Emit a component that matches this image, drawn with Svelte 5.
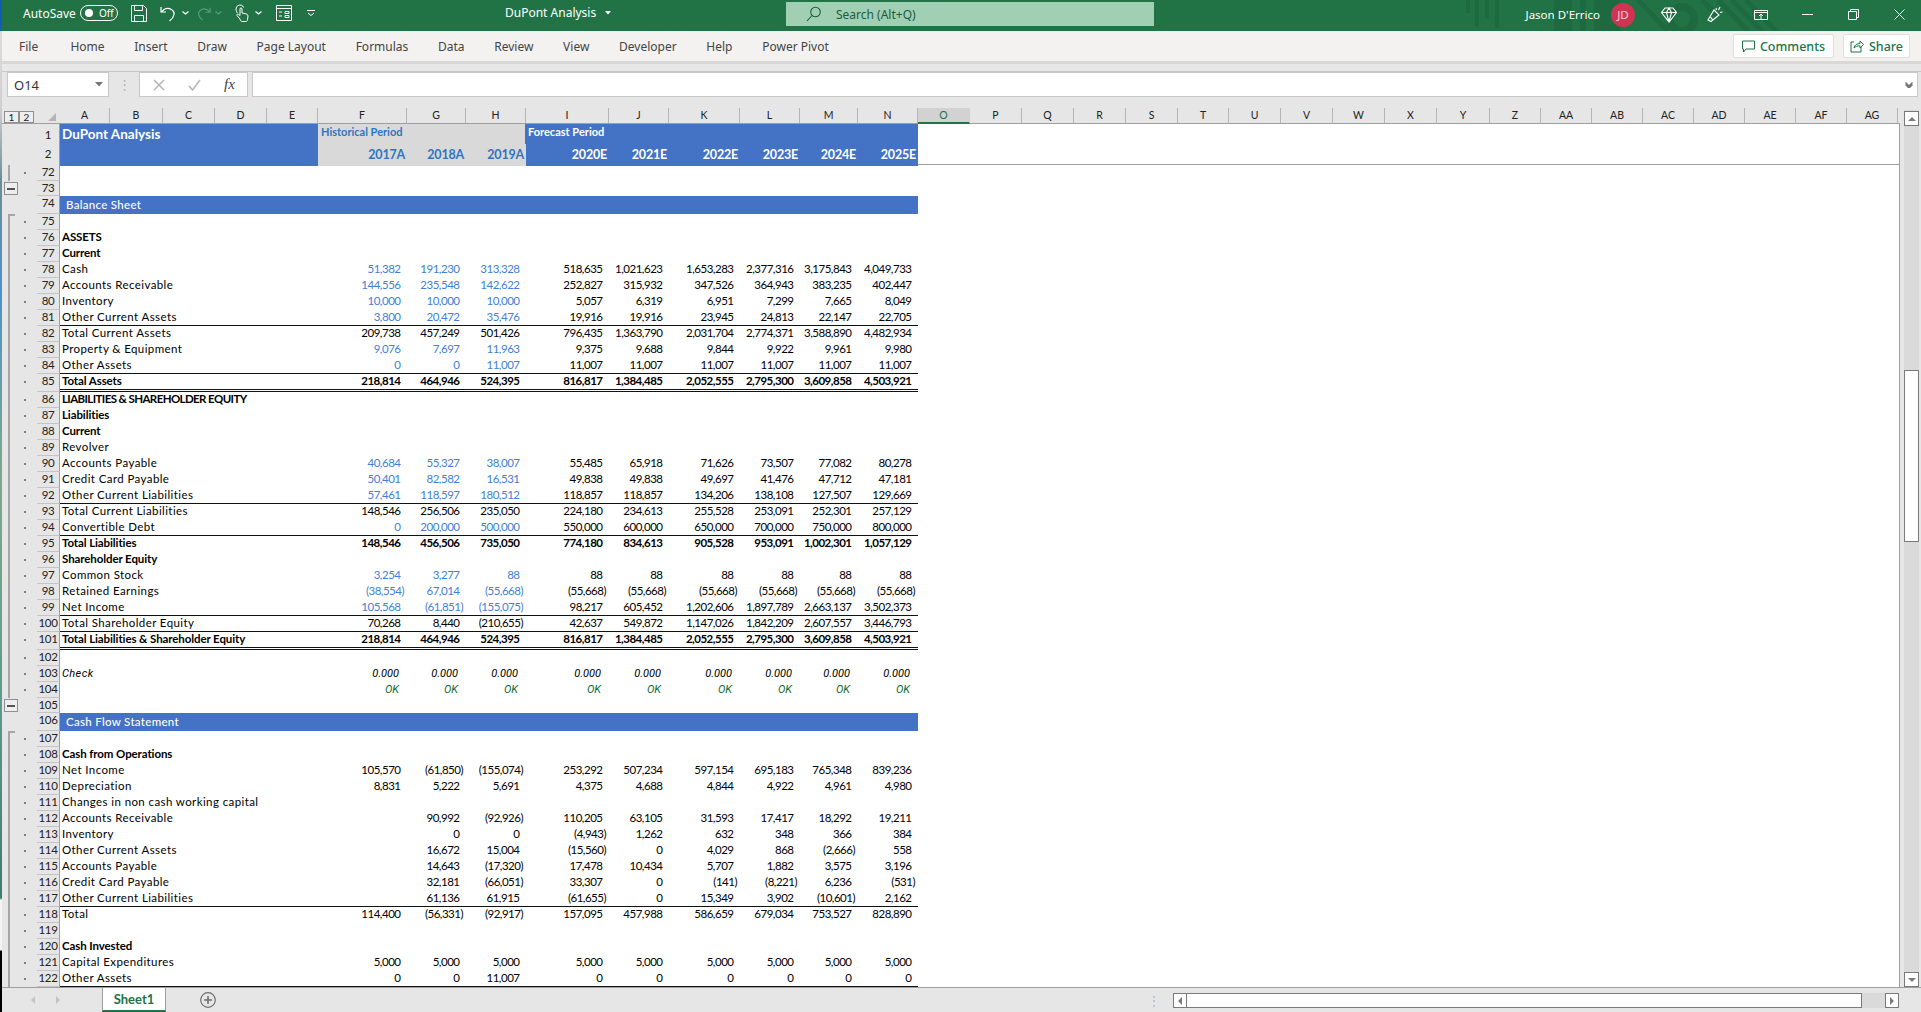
<script>
  const tabs = ["File", "Home", "Insert", "Draw", "Page Layout", "Formulas", "Data", "Review", "View", "Developer", "Help", "Power Pivot"];

  // column header labels with their widths in px
  const columns = [
    ["A", 50], ["B", 53], ["C", 52], ["D", 52], ["E", 51], ["F", 89], ["G", 59], ["H", 60], ["I", 83], ["J", 60], ["K", 71], ["L", 60], ["M", 58], ["N", 60],
    ["O", 52], ["P", 52], ["Q", 52], ["R", 52], ["S", 52], ["T", 51], ["U", 52], ["V", 52], ["W", 52], ["X", 52], ["Y", 53], ["Z", 51],
    ["AA", 51], ["AB", 51], ["AC", 51], ["AD", 51], ["AE", 51], ["AF", 51], ["AG", 51]
  ];

  const years = ["2017A", "2018A", "2019A", "2020E", "2021E", "2022E", "2023E", "2024E", "2025E"];

  const rows = [
    { n: 72, line: true },
    { n: 73, h: 15, minus: true },
    { n: 74, h: 18, section: "Balance Sheet" },
    { n: 75, line: true, start: true },
    { n: 76, label: "ASSETS", bold: true },
    { n: 77, label: "Current", bold: true },
    { n: 78, label: "Cash", blue: true, v: ["51,382", "191,230", "313,328", "518,635", "1,021,623", "1,653,283", "2,377,316", "3,175,843", "4,049,733"] },
    { n: 79, label: "Accounts Receivable", blue: true, v: ["144,556", "235,548", "142,622", "252,827", "315,932", "347,526", "364,943", "383,235", "402,447"] },
    { n: 80, label: "Inventory", blue: true, v: ["10,000", "10,000", "10,000", "5,057", "6,319", "6,951", "7,299", "7,665", "8,049"] },
    { n: 81, label: "Other Current Assets", blue: true, v: ["3,800", "20,472", "35,476", "19,916", "19,916", "23,945", "24,813", "22,147", "22,705"] },
    { n: 82, label: "Total Current Assets", top: true, v: ["209,738", "457,249", "501,426", "796,435", "1,363,790", "2,031,704", "2,774,371", "3,588,890", "4,482,934"] },
    { n: 83, label: "Property & Equipment", blue: true, v: ["9,076", "7,697", "11,963", "9,375", "9,688", "9,844", "9,922", "9,961", "9,980"] },
    { n: 84, label: "Other Assets", blue: true, v: ["0", "0", "11,007", "11,007", "11,007", "11,007", "11,007", "11,007", "11,007"] },
    { n: 85, h: 18, label: "Total Assets", bold: true, top: true, dbl: true, v: ["218,814", "464,946", "524,395", "816,817", "1,384,485", "2,052,555", "2,795,300", "3,609,858", "4,503,921"] },
    { n: 86, label: "LIABILITIES & SHAREHOLDER EQUITY", bold: true, caps: true },
    { n: 87, label: "Liabilities", bold: true },
    { n: 88, label: "Current", bold: true },
    { n: 89, label: "Revolver" },
    { n: 90, label: "Accounts Payable", blue: true, v: ["40,684", "55,327", "38,007", "55,485", "65,918", "71,626", "73,507", "77,082", "80,278"] },
    { n: 91, label: "Credit Card Payable", blue: true, v: ["50,401", "82,582", "16,531", "49,838", "49,838", "49,697", "41,476", "47,712", "47,181"] },
    { n: 92, label: "Other Current Liabilities", blue: true, v: ["57,461", "118,597", "180,512", "118,857", "118,857", "134,206", "138,108", "127,507", "129,669"] },
    { n: 93, label: "Total Current Liabilities", top: true, v: ["148,546", "256,506", "235,050", "224,180", "234,613", "255,528", "253,091", "252,301", "257,129"] },
    { n: 94, label: "Convertible Debt", blue: true, v: ["0", "200,000", "500,000", "550,000", "600,000", "650,000", "700,000", "750,000", "800,000"] },
    { n: 95, label: "Total Liabilities", bold: true, top: true, v: ["148,546", "456,506", "735,050", "774,180", "834,613", "905,528", "953,091", "1,002,301", "1,057,129"] },
    { n: 96, label: "Shareholder Equity", bold: true },
    { n: 97, label: "Common Stock", blue: true, v: ["3,254", "3,277", "88", "88", "88", "88", "88", "88", "88"] },
    { n: 98, label: "Retained Earnings", blue: true, v: ["(38,554)", "67,014", "(55,668)", "(55,668)", "(55,668)", "(55,668)", "(55,668)", "(55,668)", "(55,668)"] },
    { n: 99, label: "Net Income", blue: true, v: ["105,568", "(61,851)", "(155,075)", "98,217", "605,452", "1,202,606", "1,897,789", "2,663,137", "3,502,373"] },
    { n: 100, label: "Total Shareholder Equity", top: true, v: ["70,268", "8,440", "(210,655)", "42,637", "549,872", "1,147,026", "1,842,209", "2,607,557", "3,446,793"] },
    { n: 101, h: 18, label: "Total Liabilities & Shareholder Equity", bold: true, top: true, dbl: true, v: ["218,814", "464,946", "524,395", "816,817", "1,384,485", "2,052,555", "2,795,300", "3,609,858", "4,503,921"] },
    { n: 102 },
    { n: 103, label: "Check", italic: true, v: Array(9).fill("0.000") },
    { n: 104, ok: true, italic: true, v: Array(9).fill("OK") },
    { n: 105, h: 15, minus: true },
    { n: 106, h: 18, section: "Cash Flow Statement" },
    { n: 107, line: true, start: true },
    { n: 108, label: "Cash from Operations", bold: true },
    { n: 109, label: "Net Income", v: ["105,570", "(61,850)", "(155,074)", "253,292", "507,234", "597,154", "695,183", "765,348", "839,236"] },
    { n: 110, label: "Depreciation", v: ["8,831", "5,222", "5,691", "4,375", "4,688", "4,844", "4,922", "4,961", "4,980"] },
    { n: 111, label: "Changes in non cash working capital" },
    { n: 112, label: "Accounts Receivable", v: ["", "90,992", "(92,926)", "110,205", "63,105", "31,593", "17,417", "18,292", "19,211"] },
    { n: 113, label: "Inventory", v: ["", "0", "0", "(4,943)", "1,262", "632", "348", "366", "384"] },
    { n: 114, label: "Other Current Assets", v: ["", "16,672", "15,004", "(15,560)", "0", "4,029", "868", "(2,666)", "558"] },
    { n: 115, label: "Accounts Payable", v: ["", "14,643", "(17,320)", "17,478", "10,434", "5,707", "1,882", "3,575", "3,196"] },
    { n: 116, label: "Credit Card Payable", v: ["", "32,181", "(66,051)", "33,307", "0", "(141)", "(8,221)", "6,236", "(531)"] },
    { n: 117, label: "Other Current Liabilities", v: ["", "61,136", "61,915", "(61,655)", "0", "15,349", "3,902", "(10,601)", "2,162"] },
    { n: 118, label: "Total", top: true, v: ["114,400", "(56,331)", "(92,917)", "157,095", "457,988", "586,659", "679,034", "753,527", "828,890"] },
    { n: 119 },
    { n: 120, label: "Cash Invested", bold: true },
    { n: 121, label: "Capital Expenditures", v: ["5,000", "5,000", "5,000", "5,000", "5,000", "5,000", "5,000", "5,000", "5,000"] },
    { n: 122, label: "Other Assets", last: true, v: ["0", "0", "11,007", "0", "0", "0", "0", "0", "0"] }
  ];

  // rows 75-104 and 107-122 belong to an outline group
  const grouped = (n) => (n >= 75 && n <= 104) || n >= 107 || n === 72;
  const hasDot = (n) => ![73, 74, 105, 106].includes(n);
</script>

<div class="page">
  <div class="stripe"></div>
  <div class="window">
    <header class="titlebar">
      <svg class="pattern" viewBox="0 0 340 31" width="340" height="31" aria-hidden="true">
        <g fill="#1e6a40">
          <rect x="4" y="0" width="4" height="13" />
          <rect x="13" y="0" width="4" height="27" />
          <rect x="23" y="0" width="4" height="18" />
          <rect x="33" y="0" width="4" height="28" />
          <rect x="92" y="0" width="18" height="31" />
          <rect x="118" y="0" width="6" height="31" />
          <rect x="132" y="0" width="26" height="31" />
        </g>
        <circle cx="220" cy="19" r="12" fill="none" stroke="#1e6a40" stroke-width="8" />
        <g stroke="#1e6a40" stroke-width="5" fill="none">
          <path d="M176 0l30 31M256 0l30 31M270 0l30 31M284 0l30 31M240 0l16 16" />
        </g>
      </svg>
      <div class="qat">
        <span class="autosave">AutoSave</span>
        <span class="toggle"><i></i><span>Off</span></span>
        <svg class="save" width="16" height="17" viewBox="0 0 16 17" fill="none" stroke="#fff"><path d="M.5.5h12l3 3v13H.5zM3.5.5v5h8v-5M3.5 16.5v-6h9v6" /></svg>
        <svg class="undo" width="17" height="17" viewBox="0 0 17 17" fill="none" stroke="#fff" stroke-width="1.2"><path d="M1 2v5h5M1.5 7C4 3.5 8 2.5 11.5 4.5c4 2.500 3.500 7-2 11.500" /></svg>
        <svg class="caret first" width="7" height="4" viewBox="0 0 7 4" fill="none" stroke="#fff" stroke-width="1.2"><path d="M.5.5l3 2.500 3-2.500" /></svg>
        <svg class="redo" width="15" height="15" viewBox="0 0 17 17" fill="none" stroke="#5a9a78" stroke-width="1.200"><path d="M16 2v5h-5M15.500 7C13 3.500 9 2.500 5.500 4.500c-4 2.500-3.500 7 2 11.500" /></svg>
        <svg class="caret dim" width="7" height="4" viewBox="0 0 7 4" fill="none" stroke="#5a9a78" stroke-width="1.200"><path d="M.5.5l3 2.500 3-2.500" /></svg>
        <svg class="touch" width="14" height="18" viewBox="0 0 14 18" fill="none" stroke="#fff"><path d="M2.500 9C.5 7 .500 3 3 1.500c2-1 5-.500 5.500 2M5 15l-3-3.500c-.500-1 .500-2 1.500-1.200L5 11.500V5c0-1.500 2-1.500 2 0v4l4.500 1c1 .300 1.500 1 1.500 2l-.500 3.500c0 1-.500 2-1.500 2H7c-1 0-1.500-1-2-2.500z" /></svg>
        <svg class="caret second" width="7" height="4" viewBox="0 0 7 4" fill="none" stroke="#fff" stroke-width="1.200"><path d="M.5.5l3 2.500 3-2.500" /></svg>
        <svg class="form" width="16" height="16" viewBox="0 0 16 16" fill="none" stroke="#fff"><path d="M.5.5h15v15H.5zM.5 3.500h15M3 7h3M9 6.500h4v2H9zM3 11h3M9 10.500h4v2H9z" /></svg>
        <svg class="more" width="8" height="6" viewBox="0 0 8 6" fill="none" stroke="#fff"><path d="M0 .5h8M1 3l3 2.500L7 3" /></svg>
      </div>
      <div class="doc">DuPont Analysis <svg width="6" height="4" viewBox="0 0 6 4"><path d="M0 0h6L3 3.500z" fill="#fff" /></svg></div>
      <div class="search">
        <svg width="16" height="16" viewBox="0 0 16 16" fill="none" stroke="#1d5c3a" stroke-width="1.100"><circle cx="9.500" cy="6" r="4.800" /><path d="M6 9.500L1 15" /></svg>
        <span>Search (Alt+Q)</span>
      </div>
      <div class="right">
        <span class="user">Jason D'Errico</span>
        <span class="box"><span class="avatar">JD</span></span>
        <span class="box"><svg width="16" height="16" viewBox="0 0 16 16" fill="none" stroke="#fff" stroke-width="1.100"><path d="M4 1h8l3.500 4.500L8 15 .5 5.500zM.5 5.500h15M5.500 5.500L8 15l2.500-9.500M5.500 5.500L8 1l2.500 4.500" /></svg></span>
        <span class="box"><svg width="17" height="17" viewBox="0 0 17 17" fill="none" stroke="#fff" stroke-width="1.100"><path d="M1 14L7 4l5 5-8 6.500zM3 11c1 .300 2 1.300 2.500 3M9 2l.500 2M13 1l-1.500 3M15.500 6L13 6.500" /></svg></span>
        <span class="box"><svg width="14" height="10" viewBox="0 0 14 10" fill="none" stroke="#fff"><path d="M.5.5h13v9H.5zM.5 2.500h13M7 9V4.500M5 6l2-2 2 2" /></svg></span>
        <span class="box"><svg width="11" height="1" viewBox="0 0 11 1"><path d="M0 .5h11" stroke="#fff" /></svg></span>
        <span class="box"><svg width="11" height="11" viewBox="0 0 11 11" fill="none" stroke="#fff"><path d="M.5 2.500h8v8h-8zM2.500 2.500V.5h8v8H8.500" /></svg></span>
        <span class="box"><svg width="11" height="11" viewBox="0 0 11 11" fill="none" stroke="#fff"><path d="M.5.5l10 10M10.500.5l-10 10" /></svg></span>
      </div>
    </header>

    <nav class="ribbon">
      <div class="tabs">
        {#each tabs as tab}
          <span>{tab}</span>
        {/each}
      </div>
      <div class="actions">
        <button class="act comments">
          <svg width="13" height="13" viewBox="0 0 13 13" fill="none" stroke="#217346"><path d="M.5 1h12v8H4L1.500 12V9h-1z" /></svg>
          Comments
        </button>
        <button class="act share">
          <svg width="14" height="14" viewBox="0 0 14 14" fill="none" stroke="#217346"><path d="M4 3H1v10h10V8M4 9c.500-3 3-4.500 6-4.500V2l3.500 3.500L10 9V6.800C7.500 6.800 5.500 7.500 4 9z" /></svg>
          Share
        </button>
      </div>
    </nav>
    <div class="strip"></div>

    <div class="formula">
      <div class="name">O14 <svg width="8" height="5" viewBox="0 0 8 5"><path d="M0 0h8L4 4.500z" fill="#777" /></svg></div>
      <span class="grip">⋮</span>
      <div class="fx">
        <svg width="12" height="12" viewBox="0 0 12 12" stroke="#b5b5b5" stroke-width="1.500"><path d="M1 1l10 10M11 1L1 11" /></svg>
        <svg width="13" height="12" viewBox="0 0 13 12" fill="none" stroke="#b5b5b5" stroke-width="1.500"><path d="M1 7l3.500 4L12 1" /></svg>
        <i>fx</i>
      </div>
      <div class="input">
        <svg width="8" height="6" viewBox="0 0 8 6" fill="none" stroke="#777" stroke-width="1.500"><path d="M.5.500L4 4l3.500-3.500M.5 2.500L4 6l3.500-3.500" /></svg>
      </div>
    </div>

    <div class="colhead">
      <div class="corner">
        <span class="lvl">1</span><span class="lvl">2</span>
        <svg class="tri" width="8" height="8" viewBox="0 0 8 8"><path d="M8 0v8H0z" fill="#b5b5b5" /></svg>
      </div>
      {#each columns as [name, width]}
        <span class="col" class:sel={name === "O"} style="width: {width}px">{name}</span>
      {/each}
    </div>

    <div class="sheetwrap">
      <div class="sheet">
        <div class="row headrow">
          <div class="gut"></div>
          <div class="num">1</div>
          <div class="banner title">DuPont Analysis</div>
          <div class="hist caption">Historical Period</div>
          <div class="fore caption">Forecast Period</div>
        </div>
        <div class="row yearrow">
          <div class="gut"></div>
          <div class="num">2</div>
          <div class="banner"></div>
          {#each years as year, i}
            <div class="year" class:hist={i < 3} class:fore={i >= 3}>{year}</div>
          {/each}
        </div>

        {#each rows as row}
          <div class="row" style={row.h ? `height: ${row.h}px` : ""}>
            <div class="gut" class:line={grouped(row.n)} class:start={row.start}>
              {#if hasDot(row.n)}<b class="dot"></b>{/if}
              {#if row.minus}<b class="minus"></b>{/if}
            </div>
            <div class="num">{row.n}</div>
            {#if row.section}
              <div class="section">{row.section}</div>
            {:else}
              <div class="body" class:top={row.top} class:dbl={row.dbl} class:last={row.last} class:bold={row.bold} class:italic={row.italic}>
                <div class="label" class:caps={row.caps}>{row.label ?? ""}</div>
                {#each row.v ?? [] as value, i}
                  <div class="cell" class:blue={row.blue && i < 3} class:ok={row.ok} class:neg={value.endsWith(")")}>{value}</div>
                {/each}
              </div>
            {/if}
          </div>
        {/each}
      </div>
      <div class="vscroll">
        <span class="arrow up"><i></i></span>
        <span class="vthumb"></span>
        <span class="arrow down"><i></i></span>
      </div>
    </div>

    <footer class="tabbar">
      <span class="nav left"></span>
      <span class="nav next"></span>
      <span class="sheettab">Sheet1</span>
      <svg class="add" width="16" height="16" viewBox="0 0 16 16" fill="none" stroke="#6f6f6f"><circle cx="8" cy="8" r="7.300" stroke-width="1.200" /><path d="M8 4v8M4 8h8" stroke-width="1.600" /></svg>
      <span class="dots">⋮</span>
      <div class="hscroll">
        <span class="harrow"><i class="l"></i></span>
        <span class="hthumb"></span>
        <span class="htrack"></span>
        <span class="harrow"><i class="r"></i></span>
      </div>
    </footer>
  </div>
</div>

<style>
  :global(body) {
    margin: 0;
    background: #e6e6e6;
  }

  .page {
    display: flex;
    width: 1921px;
    height: 1012px;
    overflow: hidden;
    font-family: "Noto Sans", sans-serif;
  }

  .stripe {
    width: 2px;
    flex-shrink: 0;
    background: linear-gradient(#0f5fb5 0, #0f5fb5 31px, #dcdcdc 31px, #cfcfcf 108px, #6b8f96 180px, #4d92c8 290px, #7da98a 480px, #5f9a8c 700px, #3f7c6f 898px, #f4f4f4 900px, #f4f4f4 950px, #000 951px);
  }

  .window {
    flex: 1;
    min-width: 0;
    display: flex;
    flex-direction: column;
    background: #e6e6e6;
  }

  /* title bar */
  .titlebar {
    position: relative;
    height: 31px;
    background: #217346;
    display: flex;
    align-items: flex-start;
    color: #fff;
    font-size: 12px;
    flex-shrink: 0;
  }

  .pattern {
    position: absolute;
    left: 1460px;
    top: 0;
  }

  .qat {
    position: relative;
    width: 503px;
    height: 26px;
    display: flex;
    align-items: center;
    padding-left: 21px;
    box-sizing: border-box;
    flex-shrink: 0;
  }

  .autosave {
    width: 57px;
  }

  .toggle {
    width: 38px;
    height: 16px;
    box-sizing: border-box;
    border: 1px solid #fff;
    border-radius: 8px;
    display: flex;
    align-items: center;
    padding-left: 4px;
    font-size: 10px;
    gap: 6px;
  }

  .toggle i {
    width: 8px;
    height: 8px;
    border-radius: 50%;
    background: #fff;
  }

  .save { margin-left: 13px; }
  .undo { margin-left: 13px; }
  .caret.first { margin-left: 5px; }
  .redo { margin-left: 7px; }
  .caret.dim { margin-left: 4px; }
  .touch { margin-left: 13px; }
  .caret.second { margin-left: 6px; }
  .form { margin-left: 14px; }
  .more { margin-left: 15px; }

  .doc {
    position: relative;
    width: 281px;
    height: 26px;
    line-height: 26px;
    flex-shrink: 0;
  }

  .doc svg {
    margin: 0 0 2px 6px;
  }

  .search {
    position: relative;
    width: 368px;
    height: 24px;
    margin-top: 2px;
    background: #a0cfb4;
    display: flex;
    align-items: center;
    gap: 14px;
    padding-left: 20px;
    box-sizing: border-box;
    color: #1d5c3a;
    flex-shrink: 0;
  }

  .right {
    position: relative;
    margin-left: auto;
    margin-right: -1px;
    display: flex;
    align-items: center;
    height: 29px;
  }

  .user {
    font-size: 11.500px;
  }

  .box {
    width: 46px;
    display: flex;
    align-items: center;
    justify-content: center;
  }

  .avatar {
    width: 24px;
    height: 24px;
    border-radius: 50%;
    background: #d13452;
    color: #f6c9d0;
    font-size: 11.500px;
    display: flex;
    align-items: center;
    justify-content: center;
  }

  /* ribbon */
  .ribbon {
    height: 30px;
    background: #f3f2f1;
    display: flex;
    align-items: center;
    justify-content: space-between;
    flex-shrink: 0;
  }

  .tabs {
    display: flex;
    gap: 29.700px;
    padding-left: 17px;
    font-size: 12px;
    color: #444;
  }

  .tabs span:first-child {
    margin-right: 2.500px;
  }

  .actions {
    display: flex;
    gap: 9px;
    padding-right: 11px;
  }

  .act {
    height: 24px;
    box-sizing: border-box;
    background: #fff;
    border: 1px solid #e1dfdd;
    border-radius: 2px;
    color: #217346;
    font: 500 12.500px "Noto Sans", sans-serif;
    display: flex;
    align-items: center;
    justify-content: center;
    gap: 5px;
    padding: 0;
  }

  .comments { width: 101px; }
  .share { width: 67px; }

  .strip {
    height: 11px;
    flex-shrink: 0;
    background: linear-gradient(#d8d8d8 0, #d8d8d8 3px, #e8e8e8 3px, #e8e8e8 10px, #c8c8c8 10px);
  }

  /* formula bar */
  .formula {
    height: 25px;
    display: flex;
    flex-shrink: 0;
    margin-bottom: 11px;
    padding-left: 5px;
    padding-right: 3px;
    box-sizing: border-box;
  }

  .name {
    width: 102px;
    box-sizing: border-box;
    background: #fff;
    border: 1px solid #c8c8c8;
    display: flex;
    align-items: center;
    justify-content: space-between;
    padding: 0 5px 0 6px;
    font-size: 13px;
    color: #333;
  }

  .grip {
    width: 30px;
    text-align: center;
    color: #b5b5b5;
    font-size: 13px;
    line-height: 24px;
  }

  .fx {
    width: 109px;
    box-sizing: border-box;
    background: #fff;
    border: 1px solid #c8c8c8;
    display: flex;
    align-items: center;
    gap: 23px;
    padding-left: 13px;
  }

  .fx i {
    font: italic 15px "Liberation Serif", serif;
    color: #444;
  }

  .input {
    flex: 1;
    margin-left: 4px;
    background: #fff;
    border: 1px solid #c8c8c8;
    display: flex;
    align-items: center;
    justify-content: flex-end;
    padding-right: 4px;
  }

  /* column headers */
  .colhead {
    height: 16px;
    display: flex;
    flex-shrink: 0;
    border-bottom: 1px solid #9f9f9f;
    box-sizing: border-box;
    font: 10.500px Lato, sans-serif;
    color: #222;
  }

  .corner {
    width: 58px;
    display: flex;
    align-items: center;
    padding-left: 2px;
    box-sizing: border-box;
    position: relative;
  }

  .lvl {
    width: 15px;
    height: 12px;
    box-sizing: border-box;
    border: 1px solid #8f8f8f;
    background: #eee;
    display: flex;
    align-items: center;
    justify-content: center;
    font-size: 10px;
    margin-top: 3px;
  }

  .tri {
    margin-left: 14px;
    margin-top: 3px;
  }

  .col {
    flex-shrink: 0;
    box-sizing: border-box;
    text-align: center;
    line-height: 15px;
    border-right: 1px solid #b5b5b5;
  }

  .col.sel {
    background: #d2d2d2;
    border-right-color: #d2d2d2;
    border-bottom: 2px solid #217346;
    color: #217346;
    height: 16px;
  }

  /* sheet */
  .sheetwrap {
    flex: 1;
    min-height: 0;
    display: flex;
  }

  .sheet {
    width: 1898px;
    flex-shrink: 0;
    background: #fff;
    overflow: hidden;
    border-right: 1px solid #9f9f9f;
    box-sizing: border-box;
    font: 11.500px/14px Lato, sans-serif;
    color: #000;
  }

  .row {
    display: grid;
    grid-template-columns: 35px 23px 1fr;
    height: 16px;
  }

  .gut {
    position: relative;
    background: #e6e6e6;
  }

  .gut.line::before {
    content: "";
    position: absolute;
    left: 6px;
    top: 0;
    bottom: 0;
    width: 2px;
    background: #a6a6a6;
  }

  .gut.start::after {
    content: "";
    position: absolute;
    left: 6px;
    top: 0;
    width: 7px;
    height: 2px;
    background: #a6a6a6;
  }

  .dot {
    position: absolute;
    left: 22px;
    top: 7px;
    width: 1.500px;
    height: 1.500px;
    background: #7f7f7f;
  }

  .minus {
    position: absolute;
    left: 2px;
    top: 1px;
    width: 14px;
    height: 13px;
    box-sizing: border-box;
    border: 1px solid #8f8f8f;
    background: #eee;
  }

  .minus::after {
    content: "";
    position: absolute;
    left: 2px;
    right: 2px;
    top: 5px;
    height: 1.500px;
    background: #555;
  }

  .num {
    background: #e6e6e6;
    box-sizing: border-box;
    border-right: 1px solid #9f9f9f;
    border-bottom: 1px solid #c4c4c4;
    text-align: center;
    letter-spacing: -0.4px;
    color: #222;
  }

  .headrow {
    grid-template-columns: 35px 23px 258px 207px 393px 1fr;
    height: 20px;
  }

  .yearrow {
    grid-template-columns: 35px 23px 258px 89px 59px 60px 83px 60px 71px 60px 58px 60px 1fr;
    height: 20px;
    border-bottom: 1px solid #9f9f9f;
  }

  .headrow .num {
    line-height: 22px;
  }

  .yearrow .num {
    line-height: 20px;
    border-bottom: 0;
  }

  .banner,
  .section,
  .fore {
    background: #4472c4;
    color: #fff;
  }

  .hist {
    background: #d9d9d9;
    color: #2f74c4;
  }

  .title {
    font-weight: 700;
    font-size: 13.500px;
    line-height: 21px;
    padding-left: 2px;
  }

  .caption {
    font-weight: 700;
    font-size: 11px;
    line-height: 15px;
    padding-left: 3px;
  }

  .year {
    text-align: right;
    padding-right: 2px;
    font-weight: 700;
    font-size: 12.500px;
    letter-spacing: -0.2px;
    line-height: 22px;
  }

  .section {
    width: 858px;
    box-sizing: border-box;
    padding-left: 6px;
    font-weight: 500;
    font-size: 11.500px;
    letter-spacing: 0.3px;
    line-height: 18px;
  }

  .body {
    display: grid;
    grid-template-columns: 258px 89px 59px 60px 83px 60px 71px 60px 58px 60px;
    justify-content: start;
    position: relative;
  }

  .body::before {
    content: "";
    position: absolute;
    left: 0;
    width: 858px;
    top: -1px;
    height: 1px;
  }

  .body.top::before {
    background: #111;
  }

  .body.dbl::after {
    content: "";
    position: absolute;
    left: 0;
    width: 858px;
    bottom: 0;
    height: 3px;
    box-sizing: border-box;
    border-top: 1px solid #111;
    border-bottom: 1px solid #111;
  }

  .body.last::after {
    content: "";
    position: absolute;
    left: 0;
    width: 858px;
    bottom: 0;
    height: 1px;
    background: #111;
  }

  .bold {
    font-weight: 700;
  }

  .italic {
    font-family: Roboto, sans-serif;
    font-style: italic;
    font-size: 11px;
    line-height: 15px;
  }

  .label {
    padding-left: 2px;
    white-space: nowrap;
    letter-spacing: 0.4px;
  }

  .bold .label {
    letter-spacing: -0.1px;
  }

  .bold .label.caps {
    letter-spacing: -0.6px;
  }

  .cell {
    text-align: right;
    padding-right: 6.500px;
    white-space: nowrap;
    letter-spacing: -0.5px;
    font-variant-numeric: tabular-nums;
    font-kerning: none;
  }

  .italic .cell {
    padding-right: 8px;
    letter-spacing: 0;
  }

  .cell.neg {
    padding-right: 3px;
  }

  .cell.blue {
    color: #3f7fd6;
  }

  .cell.ok {
    color: #0b6b34;
  }

  /* scrollbars */
  .vscroll {
    flex: 1;
    display: flex;
    flex-direction: column;
    padding: 1px 2px 0 4px;
    position: relative;
    background: linear-gradient(90deg, #e6e6e6 4px, #dadada 4px, #dadada 19px, #e6e6e6 19px);
    margin-top: -14px;
    height: 877px;
    box-sizing: border-box;
  }

  .arrow {
    height: 15px;
    box-sizing: border-box;
    border: 1px solid #7a7a7a;
    background: #fff;
    display: flex;
    align-items: center;
    justify-content: center;
    flex-shrink: 0;
  }

  .arrow i {
    width: 0;
    height: 0;
    border: 4px solid transparent;
  }

  .arrow.up i {
    border-bottom-color: #7a7a7a;
    margin-top: -4px;
  }

  .arrow.down i {
    border-top-color: #7a7a7a;
    margin-top: 4px;
  }

  .vthumb {
    height: 172px;
    box-sizing: border-box;
    border: 1px solid #7a7a7a;
    background: #fff;
    margin-top: 244px;
  }

  .arrow.down {
    margin-top: auto;
  }

  .tabbar {
    height: 25px;
    box-sizing: border-box;
    border-top: 1px solid #9f9f9f;
    display: flex;
    align-items: center;
    position: relative;
    flex-shrink: 0;
  }

  .nav {
    width: 0;
    height: 0;
    border: 4px solid transparent;
  }

  .nav.left {
    border-right-color: #c4c4c4;
    margin-left: 25px;
  }

  .nav.next {
    border-left-color: #c4c4c4;
    margin-left: 21px;
  }

  .sheettab {
    width: 64px;
    height: 24px;
    box-sizing: border-box;
    margin-left: 38px;
    background: #fff;
    border-left: 1px solid #9f9f9f;
    border-right: 1px solid #9f9f9f;
    border-bottom: 2px solid #217346;
    color: #217346;
    font: 700 13px/22px Lato, sans-serif;
    text-align: center;
    align-self: flex-start;
  }

  .add {
    margin-left: 34px;
  }

  .dots {
    margin-left: 932px;
    color: #b5b5b5;
    font-size: 12px;
  }

  .hscroll {
    margin-left: 13px;
    height: 15px;
    display: flex;
    margin-top: 1px;
  }

  .harrow {
    width: 14px;
    box-sizing: border-box;
    border: 1px solid #7a7a7a;
    background: #fff;
    display: flex;
    align-items: center;
    justify-content: center;
  }

  .harrow i {
    width: 0;
    height: 0;
    border: 4px solid transparent;
  }

  .harrow i.l {
    border-right-color: #7a7a7a;
    margin-left: -4px;
  }

  .harrow i.r {
    border-left-color: #7a7a7a;
    margin-left: 4px;
  }

  .hthumb {
    width: 675px;
    box-sizing: border-box;
    border: 1px solid #7a7a7a;
    border-left: 0;
    background: #fff;
  }

  .htrack {
    width: 23px;
    background: #dadada;
  }
</style>
